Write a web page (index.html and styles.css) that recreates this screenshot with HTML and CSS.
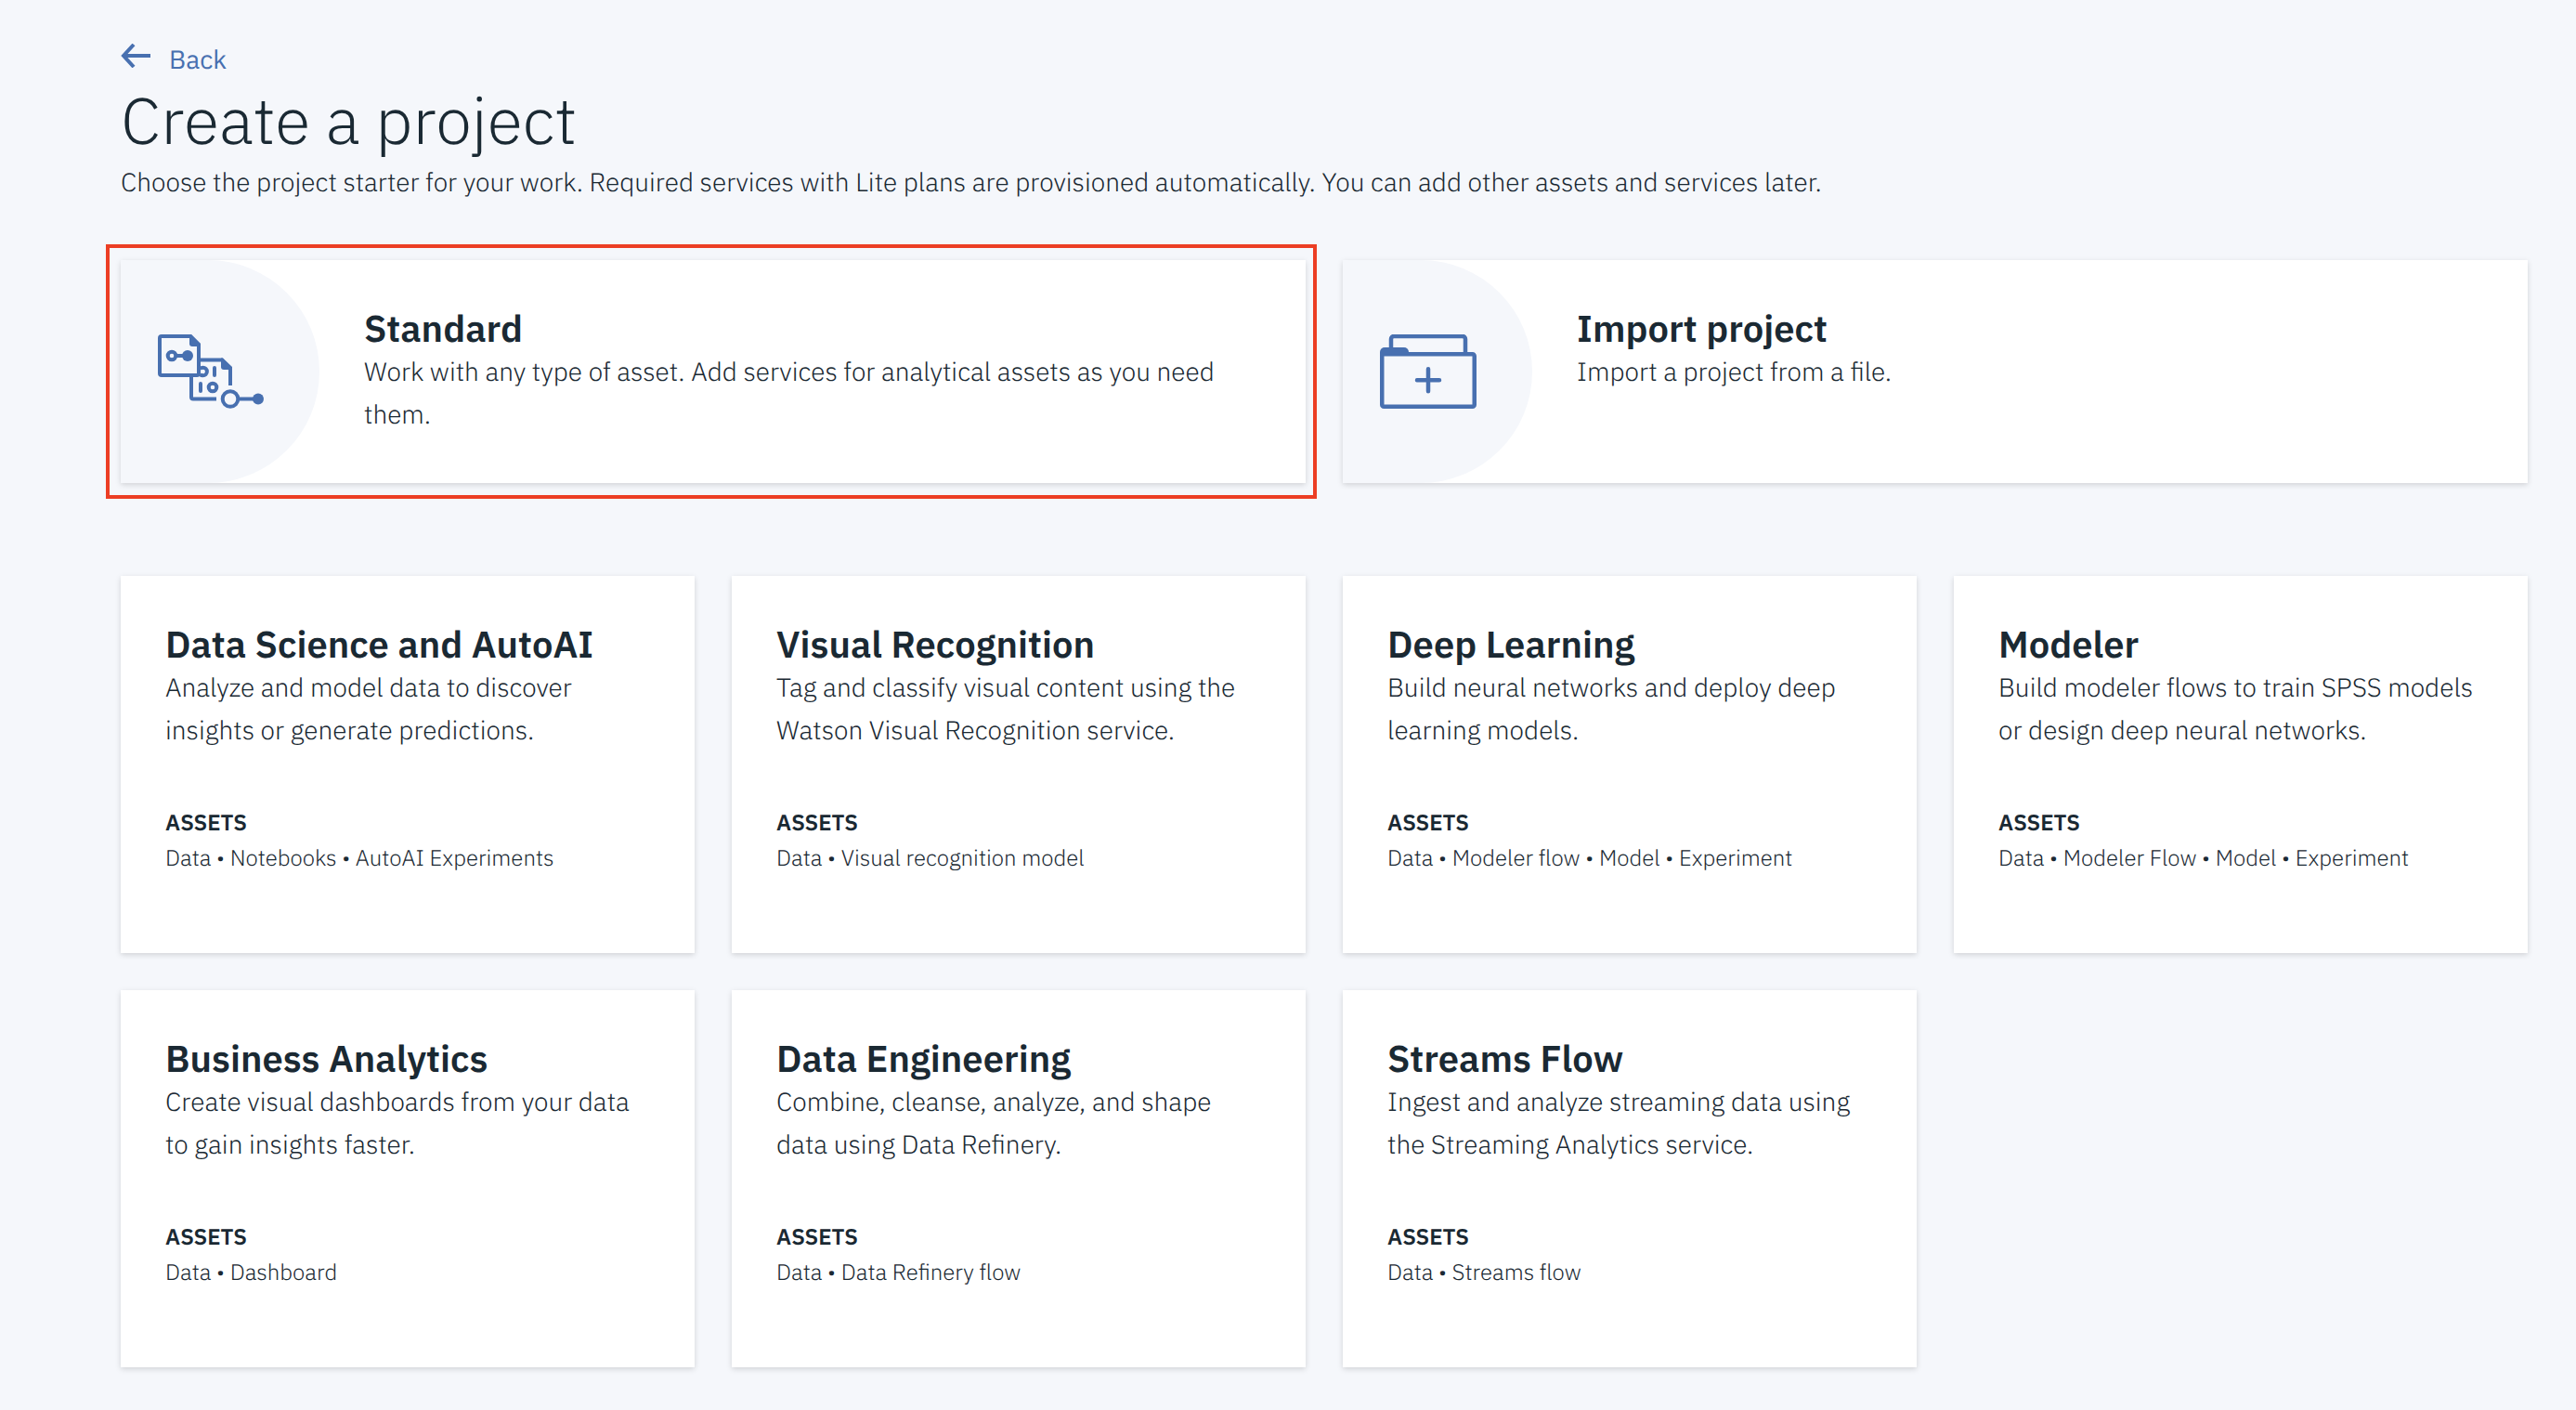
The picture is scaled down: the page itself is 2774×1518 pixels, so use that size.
FILE: index.html
```html
<!DOCTYPE html>
<html lang="en">
<head>
<meta charset="utf-8">
<title>Create a project</title>
<link rel="stylesheet" href="styles.css">
</head>
<body>
<main class="page">
  <header class="page-header">
    <a class="back" href="#back">
      <svg class="back-icon" width="32" height="26" viewBox="0 0 32 26" aria-hidden="true"><path d="M32 13H3M14 1L3 13l11 12" fill="none" stroke="currentColor" stroke-width="4"/></svg>
      <span>Back</span>
    </a>
    <h1 class="page-title">Create a project</h1>
    <p class="page-intro">Choose the project starter for your work. Required services with Lite plans are provisioned automatically. You can add other assets and services later.</p>
  </header>

  <section class="starters">
    <a class="card starter starter-highlighted" href="#standard">
      <span class="starter-art">
        <svg width="114" height="80" viewBox="0 0 114 80" fill="none" stroke="currentColor" stroke-width="4" aria-hidden="true">
          <path d="M4 2H35L44 11V42a2 2 0 0 1-2 2H4a2 2 0 0 1-2-2V4a2 2 0 0 1 2-2z"/>
          <path d="M34 0h2L46 10v3h-9a3 3 0 0 1-3-3z" fill="currentColor" stroke="none"/>
          <path d="M18 23h10M46 27.500H69L78 37V55M36 46V67.500a2 2 0 0 0 2 2H63"/>
          <path d="M61 36v8M46 53v8" stroke-linecap="round"/>
          <path d="M88 69.500h16"/>
          <path d="M68 25.500h2L80 35v3h-9a3 3 0 0 1-3-3z" fill="currentColor" stroke="none"/>
          <circle cx="15" cy="23" r="4.300"/>
          <circle cx="59" cy="57" r="4.300"/>
          <path d="M45.500 37a4.300 4.300 0 1 1 0 6"/>
          <circle cx="78" cy="69.500" r="8.300"/>
          <circle cx="32" cy="23" r="6" fill="currentColor" stroke="none"/>
          <circle cx="108" cy="69.500" r="6" fill="currentColor" stroke="none"/>
        </svg>
      </span>
      <span class="starter-body">
        <strong class="card-title">Standard</strong>
        <span class="card-text">Work with any type of asset. Add services for analytical assets as you need them.</span>
      </span>
    </a>
    <a class="card starter" href="#import">
      <span class="starter-art">
        <svg width="104" height="80" viewBox="0 0 104 80" fill="none" stroke="currentColor" stroke-width="4.500" aria-hidden="true">
          <rect x="2.250" y="21.250" width="99.500" height="56.500" rx="2"/>
          <path d="M12 18V5a3 3 0 0 1 3-3H89a3 3 0 0 1 3 3V20"/>
          <path d="M0 23V19a5 5 0 0 1 5-5H26a5 5 0 0 1 5 5v4z" fill="currentColor" stroke="none"/>
          <path d="M52 37.300V61.300M40 49.300H64" stroke-linecap="round"/>
        </svg>
      </span>
      <span class="starter-body">
        <strong class="card-title">Import project</strong>
        <span class="card-text">Import a project from a file.</span>
      </span>
    </a>
  </section>

  <section class="templates">
    <a class="card template" href="#data-science">
      <h2 class="card-title">Data Science and AutoAI</h2>
      <p class="card-text">Analyze and model data to discover insights or generate predictions.</p>
      <h3 class="assets-title">ASSETS</h3>
      <p class="assets">Data • Notebooks • AutoAI Experiments</p>
    </a>
    <a class="card template" href="#visual-recognition">
      <h2 class="card-title">Visual Recognition</h2>
      <p class="card-text">Tag and classify visual content using the Watson Visual Recognition service.</p>
      <h3 class="assets-title">ASSETS</h3>
      <p class="assets">Data • Visual recognition model</p>
    </a>
    <a class="card template" href="#deep-learning">
      <h2 class="card-title">Deep Learning</h2>
      <p class="card-text">Build neural networks and deploy deep learning models.</p>
      <h3 class="assets-title">ASSETS</h3>
      <p class="assets">Data • Modeler flow • Model • Experiment</p>
    </a>
    <a class="card template" href="#modeler">
      <h2 class="card-title">Modeler</h2>
      <p class="card-text">Build modeler flows to train SPSS models or design deep neural networks.</p>
      <h3 class="assets-title">ASSETS</h3>
      <p class="assets">Data • Modeler Flow • Model • Experiment</p>
    </a>
    <a class="card template" href="#business-analytics">
      <h2 class="card-title">Business Analytics</h2>
      <p class="card-text">Create visual dashboards from your data to gain insights faster.</p>
      <h3 class="assets-title">ASSETS</h3>
      <p class="assets">Data • Dashboard</p>
    </a>
    <a class="card template" href="#data-engineering">
      <h2 class="card-title">Data Engineering</h2>
      <p class="card-text">Combine, cleanse, analyze, and shape data using Data Refinery.</p>
      <h3 class="assets-title">ASSETS</h3>
      <p class="assets">Data • Data Refinery flow</p>
    </a>
    <a class="card template" href="#streams-flow">
      <h2 class="card-title">Streams Flow</h2>
      <p class="card-text">Ingest and analyze streaming data using the Streaming Analytics service.</p>
      <h3 class="assets-title">ASSETS</h3>
      <p class="assets">Data • Streams flow</p>
    </a>
  </section>
</main>
</body>
</html>
```
FILE: styles.css
```css
* {
  box-sizing: border-box;
}

body {
  margin: 0;
  background: #f5f7fb;
  color: #1a2933;
  font-family: "IBM Plex Sans", Roboto, sans-serif;
  font-size: 28px;
  font-weight: 300;
  line-height: 46px;
  text-rendering: geometricPrecision;
}

h1, h2, h3, p {
  margin: 0;
}

a {
  color: inherit;
  text-decoration: none;
}

.page {
  padding: 41px 52px 46px 130px;
}

.page-header {
  margin-bottom: 61px;
}

.back {
  display: flex;
  width: fit-content;
  gap: 20px;
  color: #4870b0;
  font-weight: 400;
}

.back-icon {
  margin-top: 6px;
}

.page-title {
  font-size: 70px;
  font-weight: 300;
  line-height: 86px;
}

.card {
  background: #fff;
  box-shadow: 0 2px 6px rgba(0, 0, 0, 0.15);
}

.card-title {
  display: block;
  font-size: 40px;
  font-weight: 600;
  line-height: 48px;
}

.card-text {
  display: block;
}

.starters {
  display: grid;
  grid-template-columns: 1fr 1fr;
  gap: 40px;
  margin-bottom: 100px;
}

.starter {
  position: relative;
  display: flex;
  min-height: 240px;
}

.starter-highlighted::after {
  content: "";
  position: absolute;
  inset: -17px -12px -17px -16px;
  border: 4px solid #ec3e24;
}

.starter-art {
  display: flex;
  align-items: center;
  padding: 0 60px 0 40px;
  border-radius: 0 120px 120px 0;
  background: #f5f7fb;
  color: #4870b0;
}

.starter-body {
  flex: 1;
  padding: 49px 48px;
}

.templates {
  display: grid;
  grid-template-columns: repeat(4, 1fr);
  gap: 40px;
}

.template {
  min-height: 406px;
  padding: 49px 48px;
}

.assets-title {
  margin-top: 57px;
  font-size: 24px;
  font-weight: 600;
  line-height: 38px;
}

.assets {
  font-size: 24px;
  line-height: 38px;
}
```
